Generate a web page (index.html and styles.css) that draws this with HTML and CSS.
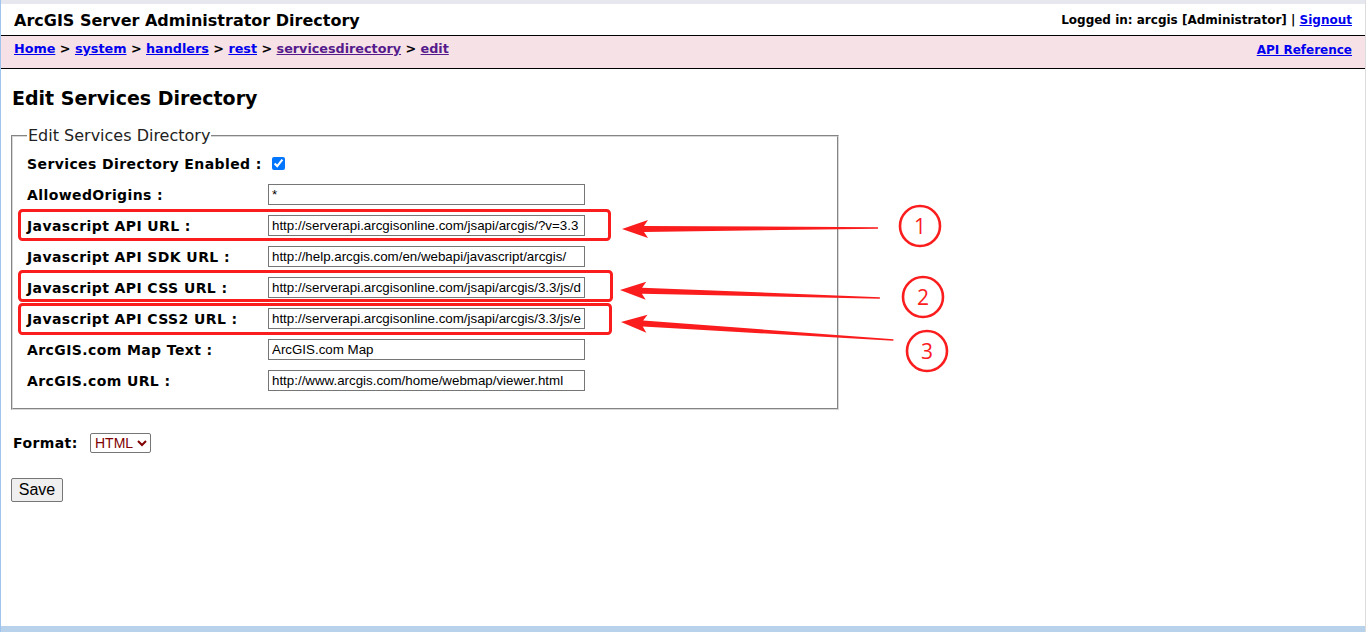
FILE: index.html
```html
<!DOCTYPE html>
<html>
<head>
<meta charset="utf-8">
<title>ArcGIS Server Administrator Directory</title>
<link rel="stylesheet" href="styles.css">
</head>
<body>
<div class="frame">
  <div class="topstrip"></div>
  <div class="header">
    <div class="title">ArcGIS Server Administrator Directory</div>
    <div class="login">Logged in: arcgis [Administrator] | <a href="#">Signout</a></div>
  </div>
  <div class="nav">
    <div class="crumbs"><a href="#">Home</a> &gt; <a href="#">system</a> &gt; <a href="#">handlers</a> &gt; <a href="#">rest</a> &gt; <a class="visited" href="#">servicesdirectory</a> &gt; <a class="visited" href="#">edit</a></div>
    <div class="apiref"><a href="#">API Reference</a></div>
  </div>
  <div class="content">
    <h2 class="heading">Edit Services Directory</h2>
    <fieldset class="box">
      <legend class="legend">Edit Services Directory</legend>
      <div class="row"><label class="lbl">Services Directory Enabled :</label><input class="chk" type="checkbox" checked></div>
      <div class="row"><label class="lbl">AllowedOrigins :</label><input class="txt" type="text" value="*"></div>
      <div class="row"><label class="lbl">Javascript API URL :</label><input class="txt" type="text" value="http://serverapi.arcgisonline.com/jsapi/arcgis/?v=3.3"></div>
      <div class="row"><label class="lbl">Javascript API SDK URL :</label><input class="txt" type="text" value="http://help.arcgis.com/en/webapi/javascript/arcgis/"></div>
      <div class="row"><label class="lbl">Javascript API CSS URL :</label><input class="txt" type="text" value="http://serverapi.arcgisonline.com/jsapi/arcgis/3.3/js/d"></div>
      <div class="row"><label class="lbl">Javascript API CSS2 URL :</label><input class="txt" type="text" value="http://serverapi.arcgisonline.com/jsapi/arcgis/3.3/js/e"></div>
      <div class="row"><label class="lbl">ArcGIS.com Map Text :</label><input class="txt" type="text" value="ArcGIS.com Map"></div>
      <div class="row"><label class="lbl">ArcGIS.com URL :</label><input class="txt" type="text" value="http://www.arcgis.com/home/webmap/viewer.html"></div>
    </fieldset>
    <div class="format"><span class="flabel">Format:</span><select class="sel"><option>HTML</option></select></div>
    <button class="save">Save</button>
  </div>
  <svg class="notes" width="1366" height="632" viewBox="0 0 1366 632">
    <g fill="none" stroke="#fb1d1d" stroke-width="3">
      <rect x="19.5" y="210.5" width="590" height="29" rx="3"/>
      <rect x="19.5" y="271.5" width="592" height="29" rx="3"/>
      <rect x="19.5" y="304.5" width="591" height="29" rx="3"/>
      <circle cx="920" cy="226" r="20" stroke-width="2.6"/>
      <circle cx="923" cy="297" r="20" stroke-width="2.6"/>
      <circle cx="927" cy="351" r="20" stroke-width="2.6"/>
    </g>
    <g fill="#fb1d1d">
      <polygon transform="translate(622,229) rotate(-0.22)" points="0,0 26,-9 22,-3 256,-0.8 256,0.8 22,3 26,9"/>
      <polygon transform="translate(620,290) rotate(1.76)" points="0,0 26,-9 22,-3 260,-0.8 260,0.8 22,3 26,9"/>
      <polygon transform="translate(621,322) rotate(3.79)" points="0,0 26,-9 22,-3 273,-0.8 273,0.8 22,3 26,9"/>
    </g>
    <g fill="#fb1d1d" font-family="'Open Sans', 'DejaVu Sans', sans-serif" font-size="21" text-anchor="middle">
      <text x="920" y="234">1</text>
      <text x="923" y="305">2</text>
      <text x="927" y="359">3</text>
    </g>
  </svg>
  <div class="bottombar"></div>
</div>
</body>
</html>
```

FILE: styles.css
```css
html, body {
  margin: 0;
  padding: 0;
  background: #ffffff;
}

.frame {
  position: relative;
  width: 1366px;
  height: 632px;
  box-sizing: border-box;
  border-left: 1px solid #9fc4ee;
  border-right: 1px solid #dcdcdc;
  font-family: "DejaVu Sans", Verdana, sans-serif;
  color: #000;
  overflow: hidden;
  display: flex;
  flex-direction: column;
}

.topstrip {
  height: 4px;
  background: #e6e7ef;
  flex: none;
}

.header {
  flex: none;
  height: 32px;
  display: flex;
  justify-content: space-between;
  align-items: center;
  padding: 0 13px 0 13px;
  border-bottom: 1px solid #000;
  box-sizing: border-box;
}

.title {
  font-size: 16px;
  font-weight: bold;
  padding-top: 1px;
}

.login {
  font-size: 12px;
  font-weight: bold;
}

a {
  color: #0000ee;
  text-decoration: underline;
}

a.visited {
  color: #551a8b;
}

.nav {
  flex: none;
  height: 33px;
  background: #f5e1e6;
  border-bottom: 1px solid #000;
  box-sizing: border-box;
  display: flex;
  justify-content: space-between;
  align-items: flex-start;
  padding: 5px 13px 0 13px;
  font-weight: bold;
}

.crumbs {
  font-size: 12.75px;
}

.apiref {
  font-size: 12px;
  padding-top: 2px;
}

.content {
  flex: 1;
  padding: 0 10px;
}

.heading {
  margin: 16px 0 0 1px;
  font-size: 19px;
  font-weight: bold;
  line-height: 26px;
}

.box {
  margin: 15px 0 0 0;
  width: 828px;
  box-sizing: border-box;
  border: 2px groove #d8d8d8;
  padding: 3px 14px 12px 14px;
}

.legend {
  font-size: 16px;
  padding: 0 1px;
  color: #222;
}

.row {
  display: flex;
  align-items: center;
  height: 31px;
}

.lbl {
  width: 241px;
  flex: none;
  font-size: 14px;
  font-weight: bold;
  letter-spacing: 0.4px;
}

.chk {
  margin: 0 0 0 4px;
  width: 13px;
  height: 13px;
  accent-color: #0075ff;
}

.txt {
  width: 317px;
  height: 21px;
  box-sizing: border-box;
  border: 1px solid #767676;
  padding: 1px 3px;
  font-family: "Liberation Sans", Arial, sans-serif;
  font-size: 13.33px;
  color: #000;
  margin: 0;
}

.format {
  display: flex;
  align-items: center;
  margin-top: 23px;
  margin-left: 2px;
}

.flabel {
  font-size: 14px;
  font-weight: bold;
  letter-spacing: 0.4px;
  width: 77px;
}

.sel {
  font-family: "Liberation Sans", Arial, sans-serif;
  font-size: 14px;
  color: #800000;
  height: 20px;
  width: 61px;
  border: 1px solid #767676;
  border-radius: 2px;
  background: #fff;
}

.save {
  display: block;
  margin-top: 25px;
  font-family: "Liberation Sans", Arial, sans-serif;
  font-size: 16px;
  width: 52px;
  height: 24px;
  padding: 0;
  border: 1px solid #767676;
  border-radius: 2px;
  background: #efefef;
  color: #000;
}

.notes {
  position: absolute;
  left: -1px;
  top: 0;
  pointer-events: none;
}

.bottombar {
  position: absolute;
  left: -1px;
  right: -1px;
  bottom: 0;
  height: 6px;
  background: #b9d2ec;
}
```
